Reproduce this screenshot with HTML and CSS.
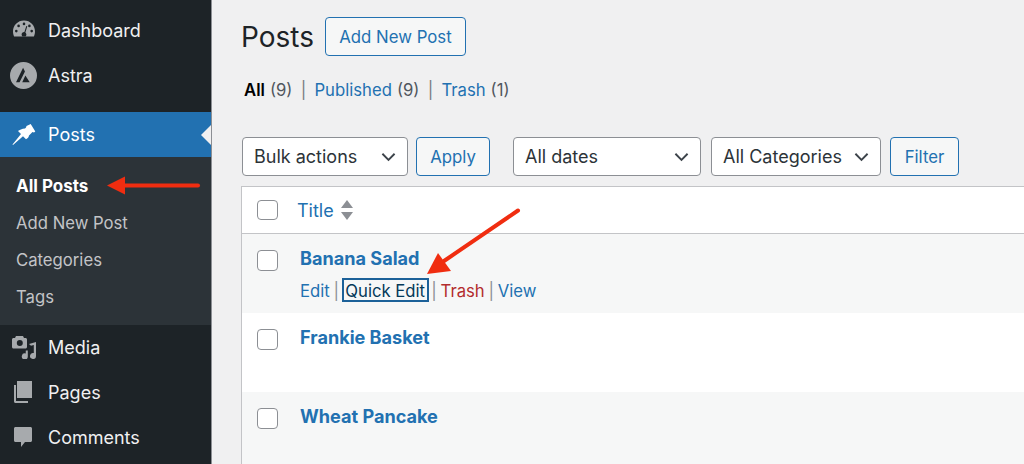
FILE: index.html
```html
<!DOCTYPE html>
<html lang="en">
<head>
<meta charset="utf-8">
<title>Posts</title>
<link rel="stylesheet" href="styles.css">
</head>
<body>
<div class="admin">
  <aside class="side">
    <nav class="menu menu-top">
      <a class="item">
        <svg class="ico" viewBox="0 0 24 24"><path fill-rule="evenodd" d="M12 2.500C5.700 2.500 1 7.400 1 13.600c0 1.900.4 3.400 1.100 4.900h19.800c.7-1.500 1.100-3 1.100-4.900C23 7.400 18.300 2.500 12 2.500zM12 4.600a1.300 1.300 0 1 1 0 2.600 1.300 1.300 0 0 1 0-2.600zM6.600 6.600a1.300 1.300 0 1 1 0 2.600 1.300 1.300 0 0 1 0-2.600zM17.400 6.600a1.300 1.300 0 1 1 0 2.600 1.300 1.300 0 0 1 0-2.600zM4.300 11.800a1.300 1.300 0 1 1 0 2.600 1.300 1.300 0 0 1 0-2.600zM19.700 11.800a1.300 1.300 0 1 1 0 2.600 1.300 1.300 0 0 1 0-2.600zM15.300 8.200l-1.900 6.300c.6.5 1 1.200 1 2 0 .7-.3 1.300-.7 1.800h-3.400c-.4-.5-.7-1.100-.7-1.800 0-1.400 1.100-2.500 2.500-2.500l.3-.1 1.900-6z"/></svg>
        <span>Dashboard</span>
      </a>
      <a class="item">
        <svg class="ico ico-astra" viewBox="0 0 26 26"><path fill-rule="evenodd" d="M13 0a13 13 0 1 1 0 26 13 13 0 0 1 0-26zM12.600 5.500L5.800 19.500h3.400l5.200-10.300-1.800-3.700zM14.800 13l-3 6.500h7.200z"/></svg>
        <span>Astra</span>
      </a>
    </nav>
    <nav class="menu menu-current">
      <a class="item item-current">
        <svg class="ico ico-white" viewBox="0 0 24 24"><path d="M18.700 2L23.300 9.500 22 10.500 20.500 10 17 13.500C17 15 15.500 16.500 14 17.300L11 14.300 1 23 .5 22.500 9 12 6 9C7.500 7.800 10 6.800 13 6.500L14 5.500 14.500 4z"/></svg>
        <span>Posts</span>
      </a>
      <ul class="sub">
        <li class="sub-current">All Posts</li>
        <li>Add New Post</li>
        <li>Categories</li>
        <li>Tags</li>
      </ul>
    </nav>
    <nav class="menu menu-rest">
      <a class="item">
        <svg class="ico" viewBox="0 0 24 24"><path fill-rule="evenodd" d="M4 1h7l1 2h1.500c.8 0 1.500.7 1.500 1.500V12c0 .8-.7 1.500-1.500 1.500h-12C.7 13.500 0 12.800 0 12V4.500C0 3.700.7 3 1.500 3H3zM7.800 5a3 3 0 1 0 0 6 3 3 0 0 0 0-6z"/><path d="M17 9l7-2v14a3 3 0 1 1-2.200-2.900V10l-2.800.8zM13.800 15.500l-.1 3.100a3 3 0 1 0 2.100 2.900v-6z"/></svg>
        <span>Media</span>
      </a>
      <a class="item">
        <svg class="ico" viewBox="0 0 24 24"><path d="M5 1h15v17H5zM2 5h2v16h12v2H3.500C2.700 23 2 22.300 2 21.500z"/></svg>
        <span>Pages</span>
      </a>
      <a class="item">
        <svg class="ico" viewBox="0 0 24 24"><path d="M3.500 2h15c.8 0 1.500.7 1.500 1.500v12c0 .8-.7 1.500-1.500 1.500H13l-4 5v-5H3.500C2.700 17 2 16.300 2 15.500v-12C2 2.700 2.700 2 3.500 2z"/></svg>
        <span>Comments</span>
      </a>
    </nav>
  </aside>

  <main class="main">
    <header class="head">
      <h1>Posts</h1>
      <a class="btn btn-add">Add New Post</a>
    </header>
    <div class="views">
      <b>All</b><span class="count">(9)</span><i>|</i><a>Published</a><span class="count">(9)</span><i>|</i><a>Trash</a><span class="count">(1)</span>
    </div>
    <div class="filters">
      <div class="select w-bulk">Bulk actions<svg viewBox="0 0 16 10"><path d="M1.500 1.500L8 8l6.500-6.500"/></svg></div>
      <a class="btn btn-apply">Apply</a>
      <div class="select w-dates">All dates<svg viewBox="0 0 16 10"><path d="M1.500 1.500L8 8l6.500-6.500"/></svg></div>
      <div class="select w-cats">All Categories<svg viewBox="0 0 16 10"><path d="M1.500 1.500L8 8l6.500-6.500"/></svg></div>
      <a class="btn btn-filter">Filter</a>
    </div>
    <section class="table">
      <div class="row row-head">
        <span class="check"></span>
        <a class="th">Title</a>
        <svg class="sort" viewBox="0 0 12 20"><path d="M6 0l6 8H0zM0 12h12l-6 8z"/></svg>
      </div>
      <div class="row row-post alt">
        <span class="check"></span>
        <div class="cell">
          <a class="title">Banana Salad</a>
          <div class="actions"><a>Edit</a><i>|</i><a class="focus">Quick Edit</a><i>|</i><a class="danger">Trash</a><i>|</i><a>View</a></div>
        </div>
      </div>
      <div class="row row-post">
        <span class="check"></span>
        <div class="cell"><a class="title">Frankie Basket</a></div>
      </div>
      <div class="row row-post alt">
        <span class="check"></span>
        <div class="cell"><a class="title">Wheat Pancake</a></div>
      </div>
    </section>
  </main>

  <svg class="arrows" viewBox="0 0 1024 464">
    <path class="shaft" d="M198 185.500H122"/>
    <path class="head-r" d="M107 185.500l18-9v18z"/>
    <path class="shaft" d="M518 210.500L444 261"/>
    <path class="head-r" d="M427 274l11-21 13 18z"/>
  </svg>
</div>
</body>
</html>
```

FILE: styles.css
```css
* { box-sizing: border-box; }
html, body { margin: 0; height: 100%; overflow: hidden; }
body { font-family: Inter, "Liberation Sans", sans-serif; background: #f0f0f1; color: #2c3338; font-size: 17px; }
a { color: #2271b1; text-decoration: none; }
i { font-style: normal; }

.admin { position: relative; display: flex; width: 1024px; height: 464px; overflow: hidden; }

.side { width: 212px; flex: none; background: #1d2327; border-right: 1px solid #8c8f94; display: flex; flex-direction: column; }
.menu-top { padding-top: 7.500px; height: 112px; }
.item { display: flex; align-items: center; height: 45px; color: #f0f0f1; font-size: 18px; padding-left: 48px; position: relative; }
.ico { position: absolute; left: 12px; top: 10px; width: 24px; height: 24px; fill: #a7aaad; }
.ico-astra { left: 10px; top: 9px; width: 27px; height: 27px; }
.ico-white { fill: #fff; }
.item-current { background: #2271b1; color: #fff; }
.item-current::after { content: ""; position: absolute; right: 0; top: 13px; border: 10px solid transparent; border-right-color: #f0f0f1; border-left-width: 0; }
.sub { list-style: none; margin: 0; padding: 10.500px 0 10px 16px; height: 168px; background: #2c3338; color: #c3c4c7; font-size: 16.700px; }
.sub li { height: 37px; line-height: 37px; }
.sub-current { color: #fff; font-weight: 700; font-size: 17px; }

.main { flex: 1; min-width: 0; padding: 17px 0 0 29px; }
.head { display: flex; align-items: center; gap: 11px; height: 39px; }
h1 { margin: 0; padding-top: 1px; font-size: 28px; font-weight: 400; color: #1d2327; }
.btn { display: flex; align-items: center; justify-content: center; height: 39px; border: 1.500px solid #2271b1; border-radius: 4px; background: #f6f7f7; font-size: 16.800px; }
.btn-add { width: 141px; }
.views { display: flex; align-items: center; margin: 23px 0 0 3px; height: 22px; font-size: 16.700px; color: #50575e; }
.views b { color: #000; font-weight: 600; }
.views .count { margin-left: 5px; }
.views i { width: 22px; text-align: center; color: #787c82; }
.filters { display: flex; align-items: center; margin: 36px 0 0 1px; height: 39px; }
.select { display: flex; align-items: center; justify-content: space-between; height: 39px; padding: 0 11px; border: 1.500px solid #8c8f94; border-radius: 4px; background: #fff; font-size: 18px; color: #2c3338; }
.select svg { width: 15px; height: 10px; fill: none; stroke: #3c434a; stroke-width: 2; }
.w-bulk { width: 166px; }
.w-dates { width: 188px; margin-left: 23px; }
.w-cats { width: 170px; margin-left: 10px; }
.btn-apply { width: 74px; margin-left: 8px; }
.btn-filter { width: 69px; margin-left: 9px; }

.table { margin-top: 10px; background: #fff; border: 1px solid #c3c4c7; border-right: 0; border-bottom: 0; }
.row { display: flex; align-items: flex-start; padding-left: 15px; }
.row-head { height: 47px; align-items: center; border-bottom: 1px solid #c3c4c7; }
.check { width: 20.500px; height: 20.500px; flex: none; border: 1.500px solid #8c8f94; border-radius: 4px; background: #fff; }
.th { margin-left: 19.500px; font-size: 18px; }
.sort { width: 12px; height: 20px; margin-left: 7px; fill: #8c8f94; }
.row-post { height: 79px; padding-top: 16px; }
.alt { background: #f6f7f7; }
.cell { margin-left: 22.500px; }
.title { display: block; font-size: 18.100px; font-weight: 700; line-height: 16px; }
.actions { display: flex; align-items: flex-start; margin-top: 12px; height: 24px; line-height: 26px; font-size: 16.700px; white-space: nowrap; }
.actions i { width: 13px; text-align: center; color: #8c8f94; }
.actions .focus { color: #043959; border: 2px solid #1c6199; padding: 0 1.500px; height: 24px; line-height: 22px; margin: 0 -1px; }
.actions .danger { color: #b32d2e; }

.arrows { position: absolute; left: 0; top: 0; width: 1024px; height: 464px; pointer-events: none; }
.shaft { fill: none; stroke: #f02d10; stroke-width: 4; stroke-linecap: round; }
.head-r { fill: #f02d10; }
```
